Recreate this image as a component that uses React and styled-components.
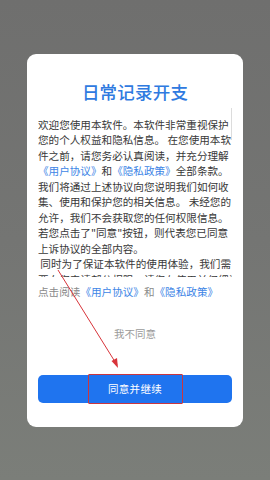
import React from "react";
import styled, { createGlobalStyle } from "styled-components";

const Global = createGlobalStyle`
  html, body { margin: 0; padding: 0; }
  body { font-family: "Noto Sans CJK SC", "Noto Sans", sans-serif; }
  * { box-sizing: border-box; }
`;

const Screen = styled.div`
  position: relative;
  width: 270px;
  height: 480px;
  display: flex;
  align-items: center;
  justify-content: center;
  background: linear-gradient(180deg, #6f6f6e 0%, #747573 50%, #7b7e79 100%);
  overflow: hidden;
`;

const Card = styled.div`
  width: 216px;
  height: 373px;
  background: #ffffff;
  border-radius: 9px;
  padding: 26px 11px 0 11px;
  display: flex;
  flex-direction: column;
  align-items: stretch;
`;

const Title = styled.h1`
  margin: 0;
  font-size: 17.5px;
  line-height: 24px;
  font-weight: 500;
  color: #2f7ae0;
  text-align: center;
  letter-spacing: 0.2px;
`;

const ScrollArea = styled.div`
  position: relative;
  margin-top: 4px;
  height: 169px;
  padding-top: 9px;
  overflow: hidden;
`;

const ScrollThumb = styled.div`
  position: absolute;
  right: 0;
  top: 0;
  width: 1.5px;
  height: 32px;
  background: #dcdcdc;
`;

const Body = styled.p`
  margin: 0;
  font-size: 10.6px;
  line-height: 15.5px;
  color: #383838;
  white-space: nowrap;
`;

const Link = styled.span`
  color: #3d85e6;
`;

const Notice = styled.p`
  margin: 7px 0 0 0;
  font-size: 10.6px;
  line-height: 15.5px;
  color: #8a8a8a;
  white-space: nowrap;
`;

const Refuse = styled.button`
  margin: 27px auto 0 auto;
  padding: 0;
  border: none;
  background: none;
  font-family: inherit;
  font-size: 10.5px;
  line-height: 15.5px;
  color: #9a9a9a;
`;

const Accept = styled.button`
  position: relative;
  margin-top: 33px;
  height: 28px;
  width: 100%;
  border: none;
  border-radius: 5px;
  background: #1f74ef;
  color: #ffffff;
  font-family: inherit;
  font-size: 10.5px;
  letter-spacing: 0.3px;
  display: flex;
  align-items: center;
  justify-content: center;
`;

const Highlight = styled.span`
  position: absolute;
  left: 50px;
  top: -1px;
  width: 95px;
  height: 30px;
  border: 1.5px solid #c9363f;
  border-radius: 1px;
`;

const Arrow = styled.svg`
  position: absolute;
  left: 0;
  top: 0;
  pointer-events: none;
`;

export default function App() {
  return (
    <>
      <Global />
      <Screen>
        <Card>
          <Title>日常记录开支</Title>
          <ScrollArea>
            <Body>
              欢迎您使用本软件。本软件非常重视保护<br />
              您的个人权益和隐私信息。 在您使用本软<br />
              件之前，请您务必认真阅读，并充分理解<br />
              <Link>《用户协议》</Link>和<Link>《隐私政策》</Link>全部条款。<br />
              我们将通过上述协议向您说明我们如何收<br />
              集、使用和保护您的相关信息。 未经您的<br />
              允许，我们不会获取您的任何权限信息。<br />
              若您点击了"同意"按钮，则代表您已同意<br />
              上诉协议的全部内容。<br />
              &nbsp;同时为了保证本软件的使用体验，我们需<br />
              要向您申请部分权限，请您在使用前仔细阅
            </Body>
            <ScrollThumb />
          </ScrollArea>
          <Notice>
            点击阅读<Link>《用户协议》</Link>和<Link>《隐私政策》</Link>
          </Notice>
          <Refuse>我不同意</Refuse>
          <Accept>
            同意并继续
            <Highlight />
          </Accept>
        </Card>
        <Arrow width="270" height="480" viewBox="0 0 270 480">
          <line x1="58" y1="270" x2="117" y2="365" stroke="#d8343a" strokeWidth="1" />
          <polygon points="118,368 111.5,361 117,358" fill="#d8343a" />
        </Arrow>
      </Screen>
    </>
  );
}
